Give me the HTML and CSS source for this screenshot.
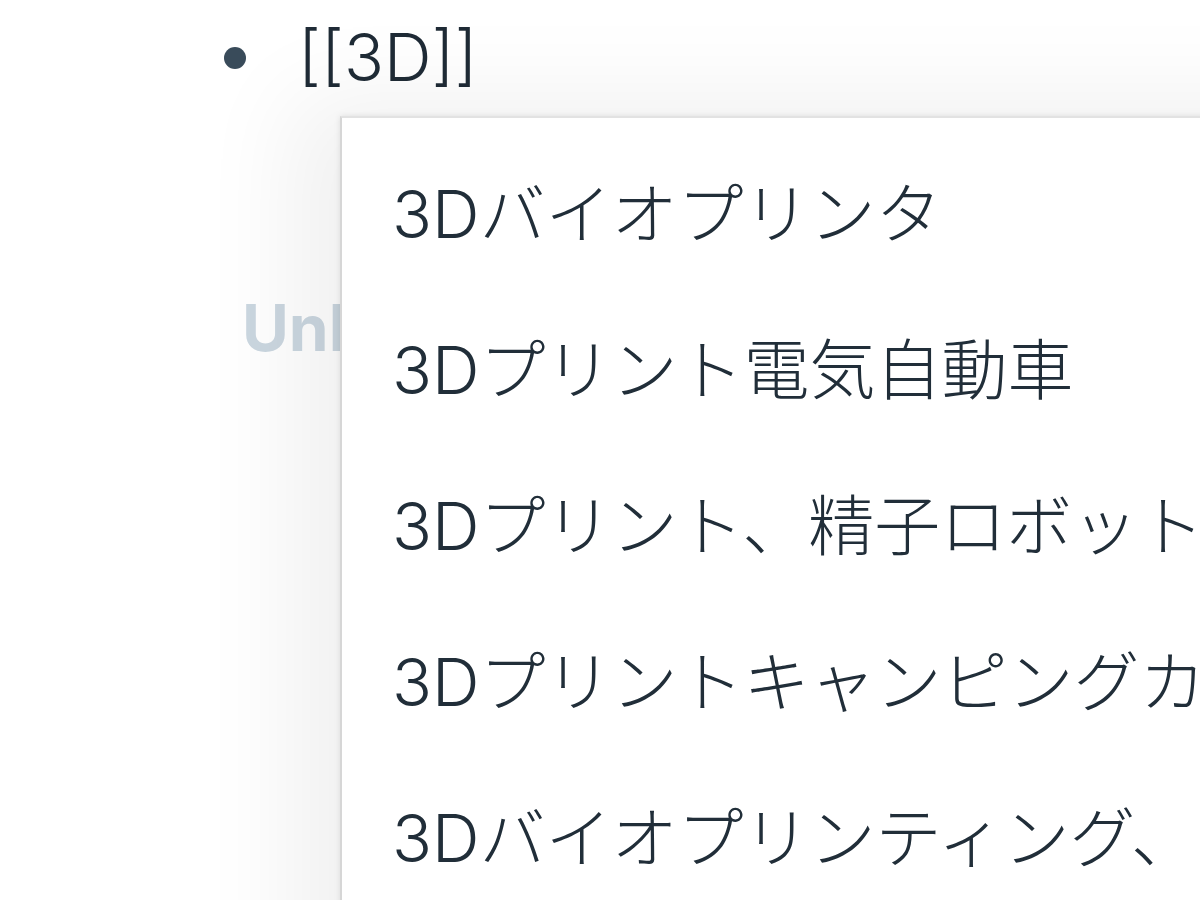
FILE: index.html
```html
<!DOCTYPE html>
<html lang="ja">
<head>
<meta charset="utf-8">
<title>3D</title>
<link rel="stylesheet" href="styles.css">
</head>
<body>
<div class="page">
  <div class="block">
    <span class="bullet"></span>
    <span class="block-text">[[3D]]</span>
  </div>
  <div class="refs-title">Unlinked references</div>

  <div class="popup">
    <ul class="menu">
      <li class="item">3Dバイオプリンタ</li>
      <li class="item">3Dプリント電気自動車</li>
      <li class="item">3Dプリント、精子ロボット</li>
      <li class="item">3Dプリントキャンピングカー</li>
      <li class="item">3Dバイオプリンティング、</li>
    </ul>
  </div>
</div>
</body>
</html>
```

FILE: styles.css
```css
html, body {
  margin: 0;
  padding: 0;
  background: #ffffff;
  overflow: hidden;
  width: 1200px;
  height: 900px;
}

.page {
  position: relative;
  width: 1200px;
  height: 900px;
  font-family: Inter, "Noto Sans CJK JP", sans-serif;
  color: #24313c;
}

.block {
  display: flex;
  align-items: center;
  padding-left: 224px;
  height: 120px;
  margin-top: -2px;
}

.bullet {
  width: 22px;
  height: 22px;
  border-radius: 50%;
  background: #394b5a;
  flex: none;
  margin-right: 52px;
}

.block-text {
  font-size: 66px;
  font-weight: 300;
  line-height: 1;
  color: #1f2b36;
  margin-top: -2px;
}

.refs-title {
  padding-left: 242px;
  margin-top: 178px;
  font-size: 64px;
  font-weight: 700;
  color: #cbd7e0;
  line-height: 1;
  white-space: nowrap;
}

.popup {
  position: absolute;
  left: 340px;
  top: 118px;
  width: 1000px;
  height: 900px;
  background: #ffffff;
  border-top: 2px solid #e2e2e2;
  border-left: 2px solid #d6d6d6;
  box-shadow: -30px 0 90px 20px rgba(0, 0, 0, 0.06), 0 0 6px rgba(0, 0, 0, 0.10);
}

.menu {
  list-style: none;
  margin: 0;
  padding: 18px 0 0 0;
}

.item {
  font-size: 66px;
  font-weight: 300;
  line-height: 156px;
  height: 156px;
  padding-left: 50px;
  white-space: nowrap;
  color: #212e39;
}
```
